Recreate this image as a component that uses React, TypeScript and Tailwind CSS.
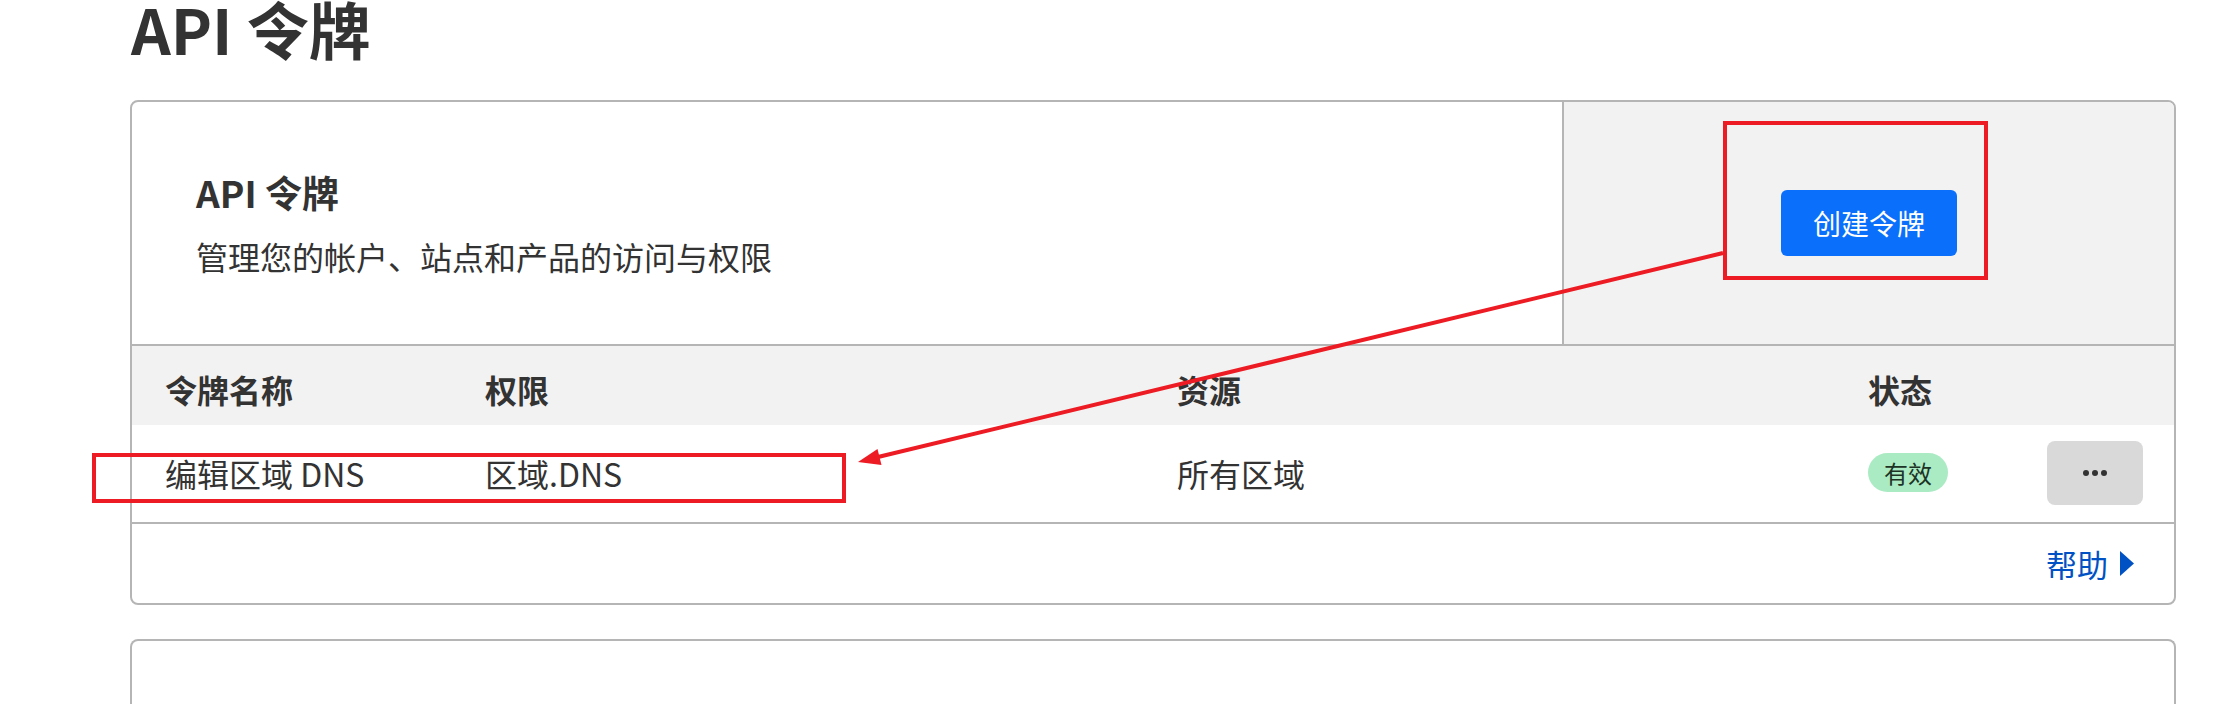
export default function App() {
  return (
    <div className="relative h-[704px] overflow-hidden bg-white pl-[130px] pr-[60px] font-['Noto_Sans_CJK_SC',sans-serif] text-[#333]">
      <h1 className="pl-[1px] pt-[2px] text-[62px] font-bold leading-[52px]">API 令牌</h1>

      <div className="mt-[46px] overflow-hidden rounded-[8px] border-2 border-[#b5b5b5]">
        {/* intro + create */}
        <div className="flex h-[244px] border-b-2 border-[#b5b5b5]">
          <div className="flex flex-1 flex-col justify-center pl-[64px]">
            <h2 className="text-[37px] font-bold leading-[37px]">API 令牌</h2>
            <p className="mt-[29px] text-[32px] leading-[32px]">管理您的帐户、站点和产品的访问与权限</p>
          </div>
          <div className="flex w-[612px] items-center justify-center border-l-2 border-[#b5b5b5] bg-[#f2f2f2]">
            <button className="h-[66px] w-[176px] rounded-[6px] bg-[#0a70fc] text-[28px] leading-none text-white">
              创建令牌
            </button>
          </div>
        </div>

        {/* table */}
        <div className="grid h-[79px] grid-cols-[320px_692px_691px_1fr] items-center bg-[#f2f2f2] pl-[33px] pr-[31px] pt-[6px] text-[32px] font-bold leading-none">
          <div>令牌名称</div>
          <div>权限</div>
          <div>资源</div>
          <div>状态</div>
        </div>
        <div className="grid h-[99px] grid-cols-[320px_692px_691px_1fr_auto] items-center border-b-2 border-[#b5b5b5] pb-[2px] pl-[33px] pr-[31px] text-[32px] leading-none">
          <div>编辑区域 DNS</div>
          <div>区域.DNS</div>
          <div>所有区域</div>
          <div>
            <span className="inline-flex h-[39px] w-[80px] items-center justify-center rounded-full bg-[#aaebc4] text-[24px] text-[#1c3325]">
              有效
            </span>
          </div>
          <button className="flex h-[64px] w-[96px] items-center justify-center gap-[3px] rounded-[8px] bg-[#d9d9d9]">
            <span className="h-[6px] w-[6px] rounded-full bg-[#333]" />
            <span className="h-[6px] w-[6px] rounded-full bg-[#333]" />
            <span className="h-[6px] w-[6px] rounded-full bg-[#333]" />
          </button>
        </div>
        <div className="flex h-[79px] items-center justify-end pr-[40px]">
          <a className="flex items-center gap-[12px] text-[31px] leading-none text-[#0051c3]">
            帮助
            <svg width="14" height="25" viewBox="0 0 14 25">
              <path d="M0 0 L14 12.5 L0 25 Z" fill="#0051c3" />
            </svg>
          </a>
        </div>
      </div>

      <div className="mt-[34px] h-[120px] rounded-t-[8px] border-2 border-b-0 border-[#b5b5b5]" />

      {/* annotation overlay */}
      <svg className="pointer-events-none absolute left-0 top-0" width="2236" height="704">
        <rect x="94" y="455" width="750" height="46" fill="none" stroke="#ed1c24" strokeWidth="4" />
        <rect x="1725" y="123" width="261" height="155" fill="none" stroke="#ed1c24" strokeWidth="4" />
        <line x1="1723" y1="253" x2="878" y2="457" stroke="#ed1c24" strokeWidth="4" />
        <polygon points="858,462 881.5,465 877.5,449" fill="#ed1c24" />
      </svg>
    </div>
  );
}
